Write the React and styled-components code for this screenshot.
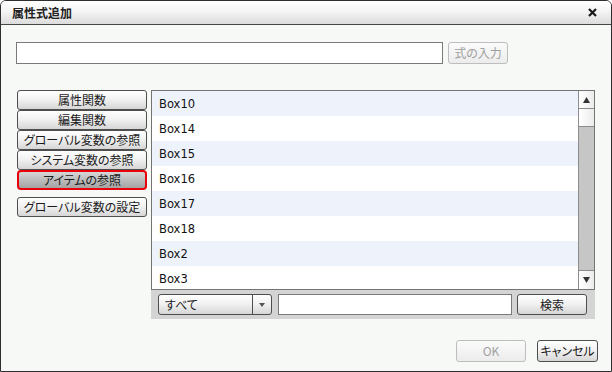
import React from "react";
import styled, {createGlobalStyle} from "styled-components";

const GlobalStyle = createGlobalStyle`
  * { box-sizing: border-box; }
  body {
    margin: 0;
    background: #ffffff;
    font-family: "Noto Sans CJK JP", "DejaVu Sans", sans-serif;
    font-feature-settings: "palt";
  }
`;

const Dialog = styled.div`
  width: 612px;
  height: 372px;
  border: 1px solid #2e2e2e;
  border-radius: 6px 6px 0 0;
  background: #f7f9f7;
  display: flex;
  flex-direction: column;
  overflow: hidden;
`;

const TitleBar = styled.div`
  height: 24px;
  flex: none;
  display: flex;
  align-items: center;
  justify-content: space-between;
  padding: 0 14px 0 11px;
  border-bottom: 1px solid #474747;
  background: linear-gradient(#ffffff, #f4f4f4 45%, #dcdcdc);
`;

const Title = styled.span`
  font-size: 12px;
  font-weight: 700;
  color: #222;
`;

const CloseIcon = styled.svg`
  width: 9px;
  height: 9px;
`;

const Body = styled.div`
  flex: 1;
  display: flex;
  flex-direction: column;
`;

const InputRow = styled.div`
  display: flex;
  gap: 5px;
  margin: 17px 0 0 15px;
`;

const TextBox = styled.input`
  width: ${p => p.width}px;
  height: ${p => p.height || 22}px;
  border: 1px solid #7a7a7a;
  background: #ffffff;
  padding: 0 4px;
  font-size: 12px;
  outline: none;
`;

const Button = styled.button`
  width: ${p => p.width}px;
  height: ${p => p.height || 22}px;
  padding: 0;
  border: 1px solid ${p => (p.disabled ? "#bdbdbd" : "#4e4e4e")};
  border-radius: 3px;
  background: ${p =>
    p.disabled
      ? "linear-gradient(#fbfbfb, #ececec)"
      : "linear-gradient(#ffffff, #f2f2f2 45%, #d6d6d6)"};
  color: ${p => (p.disabled ? "#a0a0a0" : "#1a1a1a")};
  font-family: "Noto Sans CJK JP", sans-serif;
  font-feature-settings: "palt";
  font-size: 12px;
  line-height: 1;
  white-space: nowrap;
  cursor: default;
`;

const MainRow = styled.div`
  display: flex;
  gap: 4px;
  margin: 26px 0 0 16px;
`;

const SideColumn = styled.div`
  width: 130px;
  display: flex;
  flex-direction: column;
`;

const SideButton = styled(Button)`
  width: 130px;
  height: 20px;
  margin-top: ${p => p.$spaced ? "7px" : "0"};
  ${p => p.$active && `
    border: 2px solid #e8000b;
    border-radius: 4px;
    background: linear-gradient(#d6d6d6, #bcbcbc 50%, #a4a4a4);
  `}
`;

const ListPanel = styled.div`
  width: 444px;
  display: flex;
  flex-direction: column;
  background: #d4d4d4;
`;

const ListBox = styled.div`
  height: 200px;
  border: 1px solid #747474;
  background: #ffffff;
  display: flex;
`;

const Rows = styled.div`
  flex: 1;
  overflow: hidden;
`;

const Row = styled.div`
  height: 25px;
  flex: none;
  display: flex;
  align-items: center;
  padding-left: 7px;
  background: ${p => (p.$odd ? "#eef3fb" : "#ffffff")};
  font-family: "DejaVu Sans", sans-serif;
  font-size: 11.5px;
  color: #111;
`;

const ScrollBar = styled.div`
  width: 16px;
  display: flex;
  flex-direction: column;
  background: #c6c6c6;
  border-left: 1px solid #8c8c8c;
`;

const ScrollPart = styled.div`
  height: ${p => p.height}px;
  flex: none;
  display: flex;
  align-items: center;
  justify-content: center;
  background: linear-gradient(90deg, #ffffff, #ececec);
  border-bottom: 1px solid #8c8c8c;
  ${p => p.$bottom && "border-bottom: none; border-top: 1px solid #8c8c8c; margin-top: auto;"}
`;

const Arrow = styled.svg`
  width: ${p => p.$w || 7}px;
  height: ${p => (p.$w ? p.$w - 2 : 6)}px;
`;

const FilterBar = styled.div`
  height: 29px;
  display: flex;
  align-items: center;
  gap: 6px;
  padding-left: 7px;
`;

const Select = styled.div`
  width: 114px;
  height: 21px;
  display: flex;
  border: 1px solid #4e4e4e;
  border-radius: 3px;
  background: linear-gradient(#ffffff, #f2f2f2 45%, #d6d6d6);
  font-size: 12px;
  color: #1a1a1a;
`;

const SelectLabel = styled.span`
  flex: 1;
  display: flex;
  align-items: center;
  padding-left: 6px;
  border-right: 1px solid #4e4e4e;
`;

const SelectArrow = styled.span`
  width: 18px;
  display: flex;
  align-items: center;
  justify-content: center;
`;

const SearchButton = styled(Button)`
  margin-left: -1px;
`;

const Footer = styled.div`
  display: flex;
  justify-content: flex-end;
  gap: 11px;
  margin: 21px 13px 0 0;
`;

const items = ["Box10", "Box14", "Box15", "Box16", "Box17", "Box18", "Box2", "Box3"];
const sideButtons = ["属性関数", "編集関数", "グローバル変数の参照", "システム変数の参照", "アイテムの参照"];

const Tri = ({down, fill = "#333", w}) => (
  <Arrow viewBox="0 0 7 6" $w={w} preserveAspectRatio="none">
    <path d={down ? "M0 0h7L3.5 6z" : "M3.5 0L7 6H0z"} fill={fill} />
  </Arrow>
);

export default function App() {
  return (
    <>
      <GlobalStyle />
      <Dialog>
        <TitleBar>
          <Title>属性式追加</Title>
          <CloseIcon viewBox="0 0 9 9">
            <path d="M1 1l7 7M8 1L1 8" stroke="#1a1a1a" strokeWidth="2.2" />
          </CloseIcon>
        </TitleBar>
        <Body>
          <InputRow>
            <TextBox width={427} />
            <Button width={60} disabled>式の入力</Button>
          </InputRow>
          <MainRow>
            <SideColumn>
              {sideButtons.map((label, i) => (
                <SideButton key={label} $active={i === 4}>{label}</SideButton>
              ))}
              <SideButton $spaced>グローバル変数の設定</SideButton>
            </SideColumn>
            <ListPanel>
              <ListBox>
                <Rows>
                  {items.map((item, i) => (
                    <Row key={item} $odd={i % 2 === 0}>{item}</Row>
                  ))}
                </Rows>
                <ScrollBar>
                  <ScrollPart height={18}><Tri /></ScrollPart>
                  <ScrollPart height={18} />
                  <ScrollPart height={19} $bottom><Tri down /></ScrollPart>
                </ScrollBar>
              </ListBox>
              <FilterBar>
                <Select>
                  <SelectLabel>すべて</SelectLabel>
                  <SelectArrow><Tri down fill="#555" w={6} /></SelectArrow>
                </Select>
                <TextBox width={234} height={21} />
                <SearchButton width={70} height={21}>検索</SearchButton>
              </FilterBar>
            </ListPanel>
          </MainRow>
          <Footer>
            <Button width={70} disabled>OK</Button>
            <Button width={61}>キャンセル</Button>
          </Footer>
        </Body>
      </Dialog>
    </>
  );
}
